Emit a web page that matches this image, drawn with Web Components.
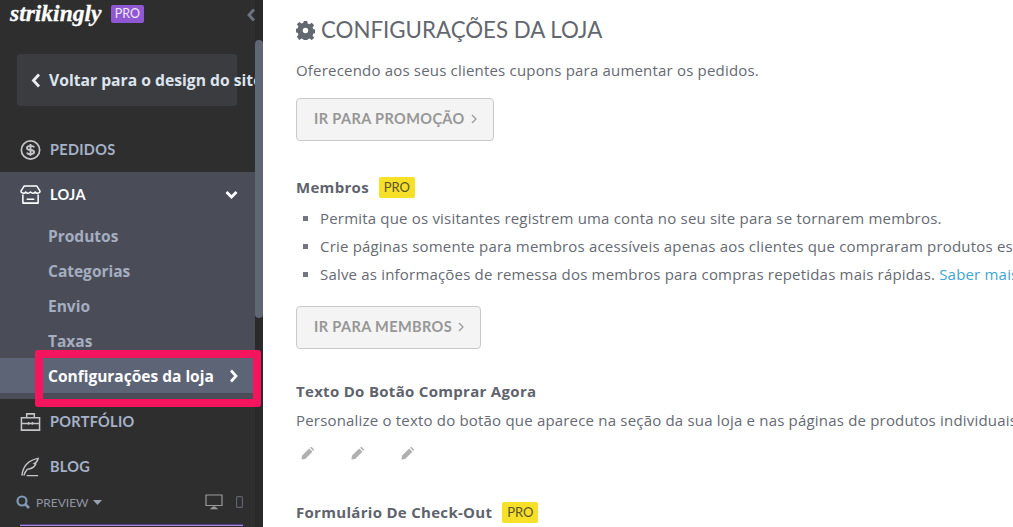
<!DOCTYPE html>
<html lang="pt">
<head>
<meta charset="utf-8">
<title>Configurações da loja</title>
<style>
  html, body { margin: 0; height: 100%; overflow: hidden; background: #fff; }
</style>
</head>
<body>
<app-shell>
  <side-bar slot="side"></side-bar>
  <store-settings slot="main"></store-settings>
</app-shell>

<script>
const ICONS = {
  money: '<circle cx="11" cy="11" r="9.600" fill="none" stroke="currentColor" stroke-width="1.800"/><path d="M15 8.300c-.5-1-1.800-1.600-4-1.600-2.400 0-3.700.9-3.700 2.200 0 1.400 1.400 1.900 3.700 2.100s3.800.8 3.800 2.200c0 1.300-1.500 2.200-3.800 2.200-2.100 0-3.400-.6-3.900-1.700M11 4.800v12.400" fill="none" stroke="currentColor" stroke-width="2"/>',
  store: '<path d="M4.500 1.500h13l3.500 5.500c0 2-3.500 3-5 .8-1.200 1.700-3.600 1.700-5 0-1.400 1.700-3.800 1.700-5 0-1.500 2.200-5 1.200-5-.8zM3 10.500v9h16v-9M7 15.500h8" fill="none" stroke="currentColor" stroke-width="1.600" stroke-linejoin="round"/>',
  case: '<path d="M1.500 6.500h19v13h-19zM1.500 12.500h19M7 6.500v-4h8v4M9 11v3M13 11v3" fill="none" stroke="currentColor" stroke-width="1.600"/>',
  feather: '<path d="M2 20C3 11 8 4 19 2c-.5 3-2 4.500-4 5.500l1.500.5c-1.500 3-4 5-9 5.500C6 15 5 17 4 20M7 20h12" fill="none" stroke="currentColor" stroke-width="1.500"/>',
  gear: '<path d="M9 0h4l.5 3 2.200.9 2.500-1.800 2.800 2.800-1.800 2.500.9 2.200 3 .5v4l-3 .5-.9 2.200 1.800 2.500-2.800 2.800-2.500-1.800-2.200.9-.5 3H9l-.5-3-2.200-.9-2.500 1.800L1 18.300l1.800-2.500-.9-2.200-3-.5v-4l3-.5.9-2.200L1 3.900 3.800 1.100l2.500 1.800 2.200-.9zM11 7.800a3.200 3.200 0 1 0 0 6.400 3.200 3.200 0 0 0 0-6.400z" fill="currentColor" fill-rule="evenodd"/>',
  pencil: '<path d="M1 9.500L8.800 1.700l3.500 3.500L4.500 13 .5 13.500zM9.800.7l.6-.5a1 1 0 0 1 1.300 0l2.100 2.100a1 1 0 0 1 0 1.300l-.5.6z" fill="currentColor"/>',
};

const svg = (name, w, h, box) => `<svg width="${w}" height="${h}" viewBox="0 0 ${box} ${box}" style="flex:none" aria-hidden="true">${ICONS[name]}</svg>`;

class AppShell extends HTMLElement {
  constructor() {
    super();
    this.attachShadow({ mode: 'open' }).innerHTML = `
      <style>
        :host { display: flex; width: 1013px; height: 527px; overflow: hidden; position: relative; }
        .side { flex: 0 0 263px; width: 263px; height: 100%; }
        .main { flex: 1; min-width: 0; height: 100%; }
      </style>
      <div class="side"><slot name="side"></slot></div>
      <div class="main"><slot name="main"></slot></div>`;
  }
}

class ProBadge extends HTMLElement {
  constructor() {
    super();
    this.attachShadow({ mode: 'open' }).innerHTML = `
      <style>
        :host { display: inline-flex; align-items: center; justify-content: center; height: 21px; width: 36px;
          background: #f7e028; color: #5b5230; border-radius: 2px; font: 400 13px "Lato", sans-serif; letter-spacing: 0; }
        :host([purple]) { height: 18px; width: 33px; background: #8f58d2; color: #efe6fa; font-size: 12.500px; }
      </style>
      PRO`;
  }
}

class NavItem extends HTMLElement {
  constructor() {
    super();
    const icon = this.getAttribute('icon');
    this.attachShadow({ mode: 'open' }).innerHTML = `
      <style>
        :host { display: flex; align-items: center; height: 45px; padding: 0 17px 0 20px; gap: 9px;
          color: #a6b2c8; font: 700 14.500px "Lato", sans-serif; letter-spacing: .3px; }
        :host([open]) { color: #fff; }
        .ic { width: 21px; height: 22px; display: flex; color: #c4c5c9; }
        :host([open]) .ic { color: #fff; }
        .lbl { flex: 1; }
        .chev { display: none; }
        :host([open]) .chev { display: block; }
      </style>
      <span class="ic">${svg(icon, 21, 22, 22)}</span>
      <span class="lbl"><slot></slot></span>
      <svg class="chev" width="13" height="10" viewBox="0 0 13 10"><path d="M1.500 2L6.500 7l5-5" fill="none" stroke="#fff" stroke-width="2.800"/></svg>`;
  }
}

class SubItem extends HTMLElement {
  constructor() {
    super();
    this.attachShadow({ mode: 'open' }).innerHTML = `
      <style>
        :host { display: flex; align-items: center; justify-content: space-between; height: 35px; padding: 0 17px 0 48px;
          color: #a5adc0; font: 700 15.500px "Open Sans", sans-serif; }
        :host([active]) { background: #5c6475; color: #fff; }
        svg { display: none; }
        :host([active]) svg { display: block; }
      </style>
      <span><slot></slot></span>
      <svg width="9" height="14" viewBox="0 0 9 14"><path d="M2 1.500L7 7l-5 5.500" fill="none" stroke="#fff" stroke-width="2.700"/></svg>`;
  }
}

class SideBar extends HTMLElement {
  constructor() {
    super();
    this.attachShadow({ mode: 'open' }).innerHTML = `
      <style>
        :host { display: flex; height: 100%; background: #2e2e2e; position: relative; overflow: hidden; }
        .col { flex: 0 0 255px; width: 255px; display: flex; flex-direction: column; min-width: 0; overflow: hidden; }
        .col > * { flex: none; }
        .top { height: 27px; display: flex; align-items: center; gap: 9px; padding-left: 10px; margin-bottom: 27px; }
        .logo { color: #fff; font: italic 700 23.500px/27px "Liberation Serif", serif; -webkit-text-stroke: .3px #fff; white-space: nowrap; width: 92px; }
        .collapse { position: absolute; left: 246px; top: 8px; }
        .back { width: 220px; height: 52px; margin: 0 0 21px 17px; background: #3b3c40; border-radius: 3px;
          display: flex; align-items: center; gap: 8px; padding-left: 14px; box-sizing: border-box; white-space: nowrap;
          color: #dce4ee; font: 700 15.700px "Open Sans", sans-serif; overflow: visible; }
        .group { background: #4a4d58; padding-bottom: 6px; }
        .preview { display: flex; align-items: center; height: 26px; margin-bottom: 9px; padding: 0 12px 0 16px; color: #8e95a3;
          font: 400 12px "Lato", sans-serif; }
        .preview span { margin: 0 4px 0 6px; }
        .spacer { flex: 1; }
        .publish { height: 2px; margin: 0 12px 0 20px; border-top: 1px solid #5a3f80; box-sizing: border-box; background: #a98be0; }
        .bar { flex: 0 0 8px; position: relative; background: #2a2a2a; }
        .thumb { position: absolute; top: 40px; left: 0; width: 8px; height: 278px; background: #5f6774; border-radius: 4px; }
      </style>
      <div class="col">
        <div class="top">
          <span class="logo">strikingly</span>
          <pro-badge purple></pro-badge>
        </div>
        <div class="back">
          <svg width="10" height="15" viewBox="0 0 10 15" style="flex:none"><path d="M8 1.500L2.500 7.500 8 13.500" fill="none" stroke="#e8edf3" stroke-width="2.800"/></svg>
          <span>Voltar para o design do site</span>
        </div>
        <nav-item icon="money">PEDIDOS</nav-item>
        <div class="group">
          <nav-item icon="store" open>LOJA</nav-item>
          <sub-item style="margin-top:1px">Produtos</sub-item>
          <sub-item>Categorias</sub-item>
          <sub-item>Envio</sub-item>
          <sub-item>Taxas</sub-item>
          <sub-item active>Configurações da loja</sub-item>
        </div>
        <nav-item icon="case">PORTFÓLIO</nav-item>
        <nav-item icon="feather">BLOG</nav-item>
        <div class="preview">
          <svg width="14" height="14" viewBox="0 0 14 14"><circle cx="6" cy="6" r="4.500" fill="none" stroke="#7f99b3" stroke-width="2.200"/><path d="M9 9l4 4" stroke="#7f99b3" stroke-width="2.600"/></svg>
          <span>PREVIEW</span>
          <svg width="9" height="5" viewBox="0 0 9 5"><path d="M0 0h9L4.500 5z" fill="#98a0ae"/></svg>
          <span class="spacer"></span>
          <svg width="18" height="16" viewBox="0 0 18 16" style="margin-right:13px"><path d="M1 1h16v10.500H1z" fill="none" stroke="#9a9a9a" stroke-width="1.200"/><path d="M9 11.500v2M5.500 15h7l-2-2h-3z" fill="#9a9a9a" stroke="#9a9a9a" stroke-width=".6"/></svg>
          <svg width="7" height="12" viewBox="0 0 7 12"><rect x=".6" y=".6" width="5.800" height="10.800" rx="1" fill="none" stroke="#5f6470" stroke-width="1.200"/></svg>
        </div>
        <div class="publish"></div>
      </div>
      <div class="bar"><div class="thumb"></div></div>
      <svg class="collapse" width="10" height="14" viewBox="0 0 10 14"><path d="M8 1.500L3 7l5 5.500" fill="none" stroke="#6c7480" stroke-width="2.800"/></svg>
      <call-out></call-out>`;
  }
}

class CallOut extends HTMLElement {
  constructor() {
    super();
    this.attachShadow({ mode: 'open' }).innerHTML = `
      <style>
        :host { position: absolute; left: 35px; top: 350px; width: 226px; height: 57px; box-sizing: border-box;
          border: 8px solid #f5155f; border-radius: 3px; pointer-events: none; }
      </style>`;
  }
}

class GhostButton extends HTMLElement {
  constructor() {
    super();
    this.attachShadow({ mode: 'open' }).innerHTML = `
      <style>
        :host { display: inline-flex; align-items: center; gap: 6px; height: 43px; padding: 0 16px 2px 17px; box-sizing: border-box;
          background: #f4f4f4; border: 1px solid #c9c9c9; border-radius: 4px; color: #979797;
          font: 700 14.500px "Lato", sans-serif; letter-spacing: .4px; white-space: nowrap; }
      </style>
      <slot></slot>
      <svg width="6" height="10" viewBox="0 0 6 10"><path d="M1 1l4 4-4 4" fill="none" stroke="#979797" stroke-width="1.200"/></svg>`;
  }
}

class SectionHead extends HTMLElement {
  constructor() {
    super();
    this.attachShadow({ mode: 'open' }).innerHTML = `
      <style>
        :host { display: flex; align-items: center; gap: 10px; height: 22px; color: #5f636d;
          font: 700 15px "Open Sans", sans-serif; letter-spacing: .3px; white-space: nowrap; }
      </style>
      <slot></slot>`;
  }
}

class StoreSettings extends HTMLElement {
  constructor() {
    super();
    this.attachShadow({ mode: 'open' }).innerHTML = `
      <style>
        :host { display: flex; flex-direction: column; align-items: flex-start; height: 100%; box-sizing: border-box; padding: 16px 0 0 33px;
          overflow: hidden; background: #fff; color: #666a73; font: 400 15px/20px "Open Sans", sans-serif; letter-spacing: .19px; white-space: nowrap; }
        :host > * { flex: none; }
        h1 { display: flex; align-items: center; gap: 6px; height: 28px; margin: 0; color: #636770; font: 400 22.300px/28px "Lato", sans-serif; letter-spacing: 0; }
        p { margin: 0; }
        ul { margin: 6px 0 0; padding: 0 0 0 24px; list-style: none; }
        li { position: relative; height: 28px; line-height: 28px; }
        li::before { content: ""; position: absolute; left: -17px; top: 12px; width: 5px; height: 5px; background: #73767e; }
        a { color: #3ea6d2; text-decoration: none; }
        .pencils { display: flex; gap: 37px; margin-top: 17px; padding-left: 5px; color: #b0b0b0; height: 14px; }
      </style>
      <h1>${svg('gear', 19, 19, 22)}CONFIGURAÇÕES DA LOJA</h1>
      <p style="margin-top:16px">Oferecendo aos seus clientes cupons para aumentar os pedidos.</p>
      <ghost-button style="margin-top:18px">IR PARA PROMOÇÃO</ghost-button>
      <section-head style="margin-top:35px">Membros <pro-badge></pro-badge></section-head>
      <ul>
        <li>Permita que os visitantes registrem uma conta no seu site para se tornarem membros.</li>
        <li>Crie páginas somente para membros acessíveis apenas aos clientes que compraram produtos específicos.</li>
        <li>Salve as informações de remessa dos membros para compras repetidas mais rápidas. <a>Saber mais</a></li>
      </ul>
      <ghost-button style="margin-top:18px">IR PARA MEMBROS</ghost-button>
      <section-head style="margin-top:31px">Texto Do Botão Comprar Agora</section-head>
      <p style="margin-top:8px">Personalize o texto do botão que aparece na seção da sua loja e nas páginas de produtos individuais.</p>
      <div class="pencils">
        ${svg('pencil', 13, 13, 14)}${svg('pencil', 13, 13, 14)}${svg('pencil', 13, 13, 14)}
      </div>
      <section-head style="margin-top:40px">Formulário De Check-Out <pro-badge></pro-badge></section-head>`;
  }
}

customElements.define('app-shell', AppShell);
customElements.define('pro-badge', ProBadge);
customElements.define('nav-item', NavItem);
customElements.define('sub-item', SubItem);
customElements.define('call-out', CallOut);
customElements.define('side-bar', SideBar);
customElements.define('ghost-button', GhostButton);
customElements.define('section-head', SectionHead);
customElements.define('store-settings', StoreSettings);
</script>
</body>
</html>
